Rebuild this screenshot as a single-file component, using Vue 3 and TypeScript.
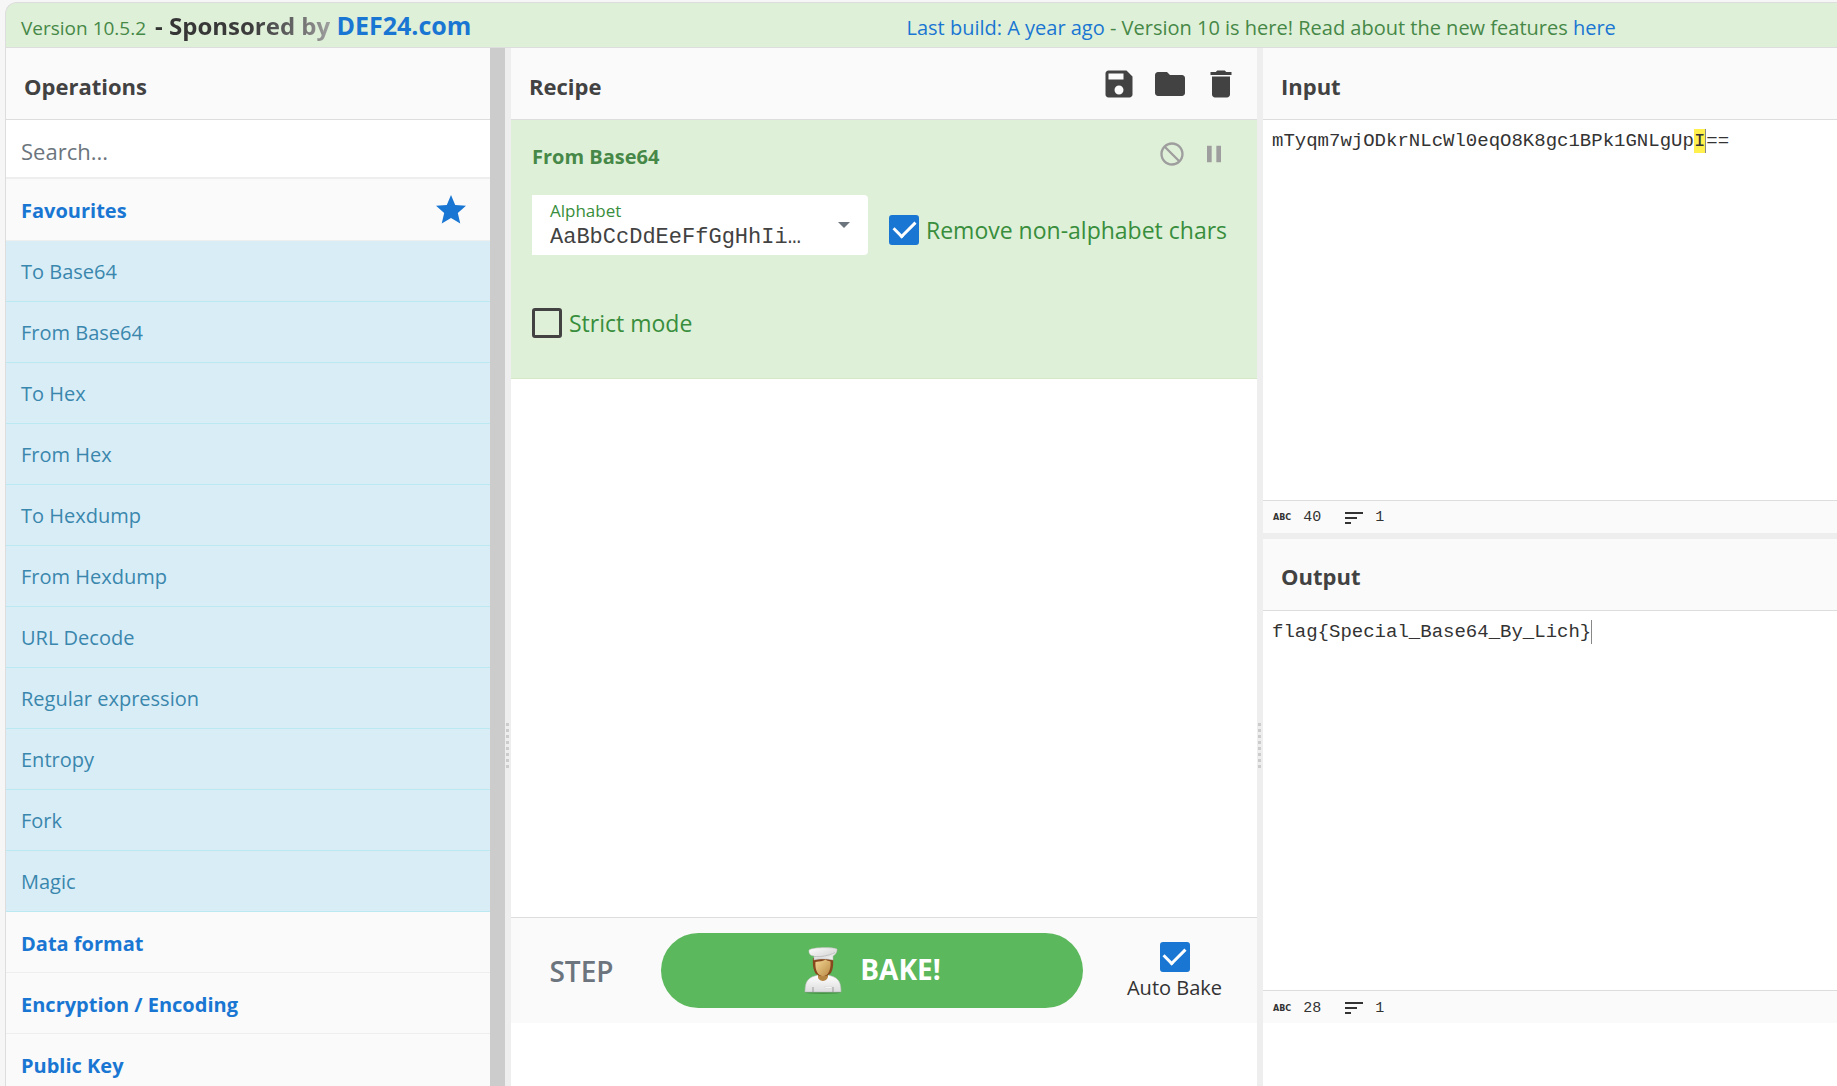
<script setup lang="ts">
import { ref } from 'vue'

const favourites: string[] = [
  'To Base64',
  'From Base64',
  'To Hex',
  'From Hex',
  'To Hexdump',
  'From Hexdump',
  'URL Decode',
  'Regular expression',
  'Entropy',
  'Fork',
  'Magic',
]
const categories: string[] = ['Data format', 'Encryption / Encoding', 'Public Key']

const search = ref('')
const alphabet = ref('AaBbCcDdEeFfGgHhIi…')
const removeNonAlphabet = ref(true)
const strictMode = ref(false)
const autoBake = ref(true)
</script>

<template>
  <div class="app">
    <header class="banner">
      <div class="banner-left">
        <span>Version 10.5.2</span>
        <strong class="sponsor"><span class="fade">- Sponsored by</span> <a href="#">DEF24.com</a></strong>
      </div>
      <div class="banner-right">
        <a href="#">Last build: A year ago</a> - Version 10 is here! Read about the new features <a href="#">here</a>
      </div>
    </header>

    <main class="workspace">
      <section class="operations">
        <div class="title"><h2>Operations</h2></div>
        <input v-model="search" class="search" type="search" placeholder="Search..." aria-label="Search operations" />
        <a class="category first" href="#">
          <span>Favourites</span>
          <svg class="star" viewBox="0 0 24 24" aria-hidden="true">
            <path d="M12 17.27 18.18 21l-1.64-7.03L22 9.24l-7.19-.61L12 2 9.19 8.63 2 9.24l5.46 4.73L5.82 21z" />
          </svg>
        </a>
        <ul class="op-list">
          <li v-for="op in favourites" :key="op">{{ op }}</li>
        </ul>
        <a v-for="name in categories" :key="name" class="category" href="#"><span>{{ name }}</span></a>
      </section>
      <div class="scroll-track"></div>
      <div class="gutter"><i v-for="n in 8" :key="n"></i></div>

      <section class="recipe">
        <div class="title">
          <h2>Recipe</h2>
          <div class="title-actions">
            <button type="button" aria-label="Save recipe">
              <svg viewBox="0 0 24 24"><path d="M17 3H5c-1.11 0-2 .9-2 2v14c0 1.1.89 2 2 2h14c1.1 0 2-.9 2-2V7l-4-4zm-5 16c-1.66 0-3-1.34-3-3s1.34-3 3-3 3 1.34 3 3-1.34 3-3 3zm3-10H5V5h10v4z" /></svg>
            </button>
            <button type="button" aria-label="Load recipe">
              <svg viewBox="0 0 24 24"><path d="M10 4H4c-1.1 0-1.99.9-1.99 2L2 18c0 1.1.9 2 2 2h16c1.1 0 2-.9 2-2V8c0-1.1-.9-2-2-2h-8l-2-2z" /></svg>
            </button>
            <button type="button" aria-label="Clear recipe">
              <svg viewBox="0 0 24 24"><path d="M6 19c0 1.1.9 2 2 2h8c1.1 0 2-.9 2-2V7H6v12zM19 4h-3.5l-1-1h-5l-1 1H5v2h14V4z" /></svg>
            </button>
          </div>
        </div>

        <div class="recipe-list">
          <article class="ingredient">
            <div class="ingredient-head">
              <h3>From Base64</h3>
              <div class="ingredient-actions">
                <button type="button" aria-label="Disable operation">
                  <svg viewBox="0 0 24 24"><path d="M12 2C6.48 2 2 6.48 2 12s4.48 10 10 10 10-4.48 10-10S17.52 2 12 2zM4 12c0-4.42 3.58-8 8-8 1.85 0 3.55.63 4.9 1.69L5.69 16.9C4.63 15.55 4 13.85 4 12zm8 8c-1.85 0-3.55-.63-4.9-1.69L18.31 7.1C19.37 8.45 20 10.15 20 12c0 4.42-3.58 8-8 8z" transform="matrix(-1 0 0 1 24 0)" /></svg>
                </button>
                <button type="button" aria-label="Set breakpoint">
                  <svg viewBox="0 0 24 24"><path d="M6 19h4V5H6v14zm8-14v14h4V5h-4z" /></svg>
                </button>
              </div>
            </div>
            <div class="args">
              <div class="combo">
                <div class="combo-field">
                  <label for="alphabet">Alphabet</label>
                  <input id="alphabet" v-model="alphabet" type="text" spellcheck="false" />
                </div>
                <button type="button" class="combo-toggle" aria-label="Choose alphabet"></button>
              </div>
              <label class="check-label"><input v-model="removeNonAlphabet" type="checkbox" />Remove non-alphabet chars</label>
              <label class="check-label"><input v-model="strictMode" type="checkbox" />Strict mode</label>
            </div>
          </article>
        </div>

        <div class="controls">
          <button type="button" class="step">STEP</button>
          <button type="button" class="bake">
            <svg class="chef" viewBox="0 0 40 48" aria-hidden="true">
              <defs>
                <linearGradient id="coat" x1="0" y1="0" x2="0" y2="1">
                  <stop offset="0" stop-color="#ffffff" />
                  <stop offset="1" stop-color="#dcdcde" />
                </linearGradient>
                <linearGradient id="hat" x1="0" y1="0" x2="1" y2="1">
                  <stop offset="0" stop-color="#ffffff" />
                  <stop offset=".6" stop-color="#dedede" />
                  <stop offset="1" stop-color="#f8f8f8" />
                </linearGradient>
                <linearGradient id="skin" x1="0" y1="0" x2="1" y2="1">
                  <stop offset="0" stop-color="#f4d795" />
                  <stop offset="1" stop-color="#b98a45" />
                </linearGradient>
              </defs>
              <ellipse cx="20" cy="45.500" rx="18" ry="1.500" fill="#2f7030" opacity=".5" />
              <path d="M2 45c0-9 2-13 8-15.500l5-1.500h10l5 1.500c6 2.500 8 6.500 8 15.500z" fill="url(#coat)" stroke="#b5b8b8" stroke-width=".6" />
              <path d="M15 26h10v4c-1 3-4 4-5 4s-5-1-5-4z" fill="#b58543" />
              <path d="M10 11h20c.6 6 0 13-3 16l-4 2h-6l-4-2c-3-4-3.500-10-3-16z" fill="#87461c" />
              <path d="M12.500 15c4-.5 8-1 10-2.500 1.500 1 3 1.500 5 2 .5 6-1 11-4 13.500-2 1.500-5 1.500-7 0-3-2.500-4.500-7-4-13z" fill="url(#skin)" />
              <path d="M6 3c5-3 23-3 28-1 .5 3-2 6-4 7v4c-5-1.500-15-1.500-19 0V9C7 9 5.500 6 6 3z" fill="url(#hat)" stroke="#b9b9b9" stroke-width=".5" />
              <path d="M11 9.500c7 .5 14-.5 21-4" fill="none" stroke="#bdbdbd" stroke-width=".9" />
              <path d="M10 40v5M30 40v5" stroke="#999" stroke-width="1" />
              <path d="M22 39.500h7v1.500h-7z" fill="#fff" stroke="#c8c8c8" stroke-width=".4" />
            </svg>
            <span>BAKE!</span>
          </button>
          <label class="auto"><input v-model="autoBake" type="checkbox" />Auto Bake</label>
        </div>
      </section>
      <div class="gutter"><i v-for="n in 8" :key="n"></i></div>

      <div class="io">
        <section class="pane">
          <div class="title"><h2>Input</h2></div>
          <div class="editor" role="textbox" aria-label="Input" contenteditable="true" spellcheck="false">mTyqm7wjODkrNLcWl0eqO8K8gc1BPk1GNLgUp<mark>I</mark><span class="caret"></span>==</div>
          <div class="status">
            <b>ABC</b><span>40</span>
            <svg viewBox="0 0 18 12" aria-hidden="true"><path d="M0 0h18v2H0zM0 5h12v2H0zM0 10h6v2H0z" /></svg><span>1</span>
          </div>
        </section>
        <div class="row-gutter"></div>
        <section class="pane">
          <div class="title"><h2>Output</h2></div>
          <div class="editor" role="textbox" aria-label="Output" aria-readonly="true">flag{Special_Base64_By_Lich}<span class="caret"></span></div>
          <div class="status">
            <b>ABC</b><span>28</span>
            <svg viewBox="0 0 18 12" aria-hidden="true"><path d="M0 0h18v2H0zM0 5h12v2H0zM0 10h6v2H0z" /></svg><span>1</span>
          </div>
        </section>
      </div>
    </main>
  </div>
</template>

<style>
body {
  background: #f6f6f6;
}
</style>

<style scoped>
* {
  box-sizing: border-box;
}

.app {
  display: flex;
  flex-direction: column;
  height: 100vh;
  margin-left: 5px;
  padding-top: 2px;
  overflow: hidden;
  font-family: 'Open Sans', 'Noto Sans', sans-serif;
  font-size: 20px;
  color: #424242;
}

a {
  color: #1976d2;
  text-decoration: none;
}

button {
  padding: 0;
  border: 0;
  background: none;
  font: inherit;
  color: inherit;
  cursor: pointer;
}

svg {
  display: block;
  fill: currentColor;
}

h2,
h3 {
  margin: 0;
}

.banner {
  display: grid;
  grid-template-columns: 885fr 930fr;
  align-items: baseline;
  flex: none;
  height: 46px;
  padding-left: 15px;
  border: 1px solid #ddd;
  border-right: 0;
  border-radius: 12px 0 0 0;
  background: #dff0d8;
  color: #468847;
  line-height: 44px;
  white-space: nowrap;
}

.banner-left {
  display: flex;
  align-items: baseline;
  gap: 9px;
  font-size: 19px;
}

.sponsor {
  font-size: 24px;
}

.sponsor a {
  font-size: 25px;
}

.fade {
  background: linear-gradient(90deg, #333 0%, #3c3c3c 55%, #666 80%, #a0a0a0 100%);
  background-clip: text;
  color: transparent;
}

.workspace {
  display: grid;
  grid-template-columns: minmax(0, 484fr) 15px 6px minmax(0, 746fr) 6px minmax(0, 574fr);
  grid-template-rows: minmax(0, 1fr);
  flex: 1;
  min-height: 0;
  border-left: 1px solid #ddd;
  background: #fff;
}

.title {
  display: flex;
  justify-content: space-between;
  align-items: center;
  flex: none;
  height: 72px;
  padding: 0 18px;
  border-bottom: 1px solid #ddd;
  background: #fafafa;
}

.title h2 {
  padding-top: 4px;
  font-size: 22px;
  line-height: 30px;
}

.title-actions {
  display: flex;
  gap: 15px;
}

.title-actions svg {
  width: 36px;
  height: 36px;
}

.operations {
  display: flex;
  flex-direction: column;
  overflow: hidden;
  background: #fafafa;
}

.search {
  flex: none;
  width: 100%;
  height: 59px;
  padding: 4px 15px 0;
  border: 0;
  border-bottom: 2px solid #eee;
  border-radius: 0;
  outline: 0;
  appearance: none;
  background: #fff;
  font: inherit;
  font-size: 22px;
}

.search::placeholder {
  color: #6c757d;
  opacity: 1;
}

.category {
  display: flex;
  justify-content: space-between;
  align-items: center;
  flex: none;
  height: 61px;
  padding: 0 21px 0 15px;
  border-bottom: 1px solid #eee;
  font-weight: 700;
}

.category span {
  padding-top: 2px;
}

.category.first {
  height: 62px;
}

.star {
  width: 36px;
  height: 36px;
}

.op-list {
  flex: none;
  margin: 0;
  padding: 0;
  list-style: none;
}

.op-list li {
  height: 61px;
  padding: 2px 15px 0;
  border-bottom: 1px solid #bce8f1;
  background: #d9edf7;
  color: #3a87ad;
  line-height: 58px;
}

.scroll-track {
  background: #ccc;
}

.gutter {
  display: flex;
  flex-direction: column;
  align-items: center;
  gap: 3px;
  padding: 675px 1px 0 0;
  background: #eee;
}

.gutter i {
  width: 3px;
  height: 3px;
  background: #ccc;
}

.recipe {
  display: flex;
  flex-direction: column;
  padding-bottom: 63px;
}

.recipe-list {
  flex: 1;
  min-height: 0;
}

.ingredient {
  padding: 20px 21px 30px;
  border-bottom: 1px solid #d6e9c6;
  background: #dff0d8;
  color: #468847;
}

.ingredient-head {
  display: flex;
  justify-content: space-between;
  height: 55px;
  padding-right: 8px;
}

.ingredient-head h3 {
  padding-top: 3px;
  font-size: 20px;
  line-height: 28px;
}

.ingredient-actions {
  display: flex;
  align-items: flex-start;
  gap: 14px;
  color: #9e9e9e;
}

.ingredient-actions svg {
  width: 28px;
  height: 28px;
}

.args {
  display: flex;
  flex-wrap: wrap;
  align-items: flex-end;
  gap: 43px 21px;
}

.combo {
  display: flex;
  width: 336px;
  height: 60px;
  border-radius: 0 4px 4px 0;
  background: #fff;
}

.combo-field {
  display: flex;
  flex-direction: column;
  flex: 1;
  min-width: 0;
  padding: 4px 0 0 18px;
}

.combo label {
  color: #388e3c;
  font-size: 17px;
  line-height: 24px;
}

.combo input {
  width: 100%;
  height: 28px;
  padding: 0;
  border: 0;
  outline: 0;
  background: none;
  color: #424242;
  font-family: 'Liberation Mono', monospace;
  font-size: 22px;
}

.combo-toggle {
  display: flex;
  justify-content: center;
  align-items: center;
  width: 48px;
}

.combo-toggle::after {
  content: '';
  border: 6px solid transparent;
  border-top-color: #6c757d;
  border-bottom: 0;
}

.check-label {
  display: flex;
  align-items: center;
  gap: 7px;
  height: 50px;
  color: #388e3c;
  font-size: 23px;
  white-space: nowrap;
}

input[type='checkbox'] {
  display: grid;
  place-items: center;
  flex: none;
  width: 30px;
  height: 30px;
  margin: 0;
  border: 3px solid #424242;
  border-radius: 3px;
  appearance: none;
}

input[type='checkbox']:checked {
  border-color: #1976d2;
  background: #1976d2;
}

input[type='checkbox']:checked::after {
  content: '';
  width: 10px;
  height: 18px;
  margin-top: -7px;
  border: solid #fff;
  border-width: 0 3px 3px 0;
  transform: rotate(45deg);
}

.controls {
  display: grid;
  grid-template-columns: 121px minmax(0, 1fr) 145px;
  align-items: center;
  gap: 19px;
  flex: none;
  height: 106px;
  padding: 0 10px;
  border-top: 1px solid #ddd;
  background: #fafafa;
}

.step {
  color: #6c757d;
  font-size: 28px;
  font-weight: 600;
}

.bake {
  display: flex;
  justify-content: center;
  align-items: center;
  gap: 17px;
  height: 75px;
  border-radius: 38px;
  background: #5cb85c;
  color: #fff;
  font-size: 28px;
  font-weight: 700;
}

.bake span {
  padding-bottom: 4px;
}

.chef {
  width: 40px;
  height: 48px;
}

.auto {
  display: flex;
  flex-direction: column;
  align-items: center;
  padding-top: 4px;
  color: #333;
  line-height: 32px;
}

.io {
  display: grid;
  grid-template-rows: minmax(0, 1fr) 6px minmax(0, 1fr);
  padding-bottom: 63px;
}

.row-gutter {
  background: #eee;
}

.pane {
  display: flex;
  flex-direction: column;
  min-height: 0;
}

.editor {
  flex: 1;
  min-height: 0;
  padding: 9px;
  outline: 0;
  color: #333;
  font-family: 'Liberation Mono', monospace;
  font-size: 19px;
  line-height: 24px;
}

.editor mark {
  display: inline-block;
  background: #fff04d;
  color: inherit;
}

.caret {
  display: inline-block;
  width: 1px;
  height: 24px;
  background: #888;
  vertical-align: top;
}

.status {
  display: flex;
  align-items: center;
  flex: none;
  height: 33px;
  padding: 2px 0 0 10px;
  border-top: 1px solid #ddd;
  background: #fafafa;
  color: #333;
  font-family: 'Liberation Mono', monospace;
  font-size: 15px;
}

.status b {
  margin-right: 12px;
  font-family: 'DejaVu Sans', sans-serif;
  font-size: 8px;
}

.status svg {
  width: 18px;
  height: 12px;
  margin: 0 12px 0 24px;
}
</style>
